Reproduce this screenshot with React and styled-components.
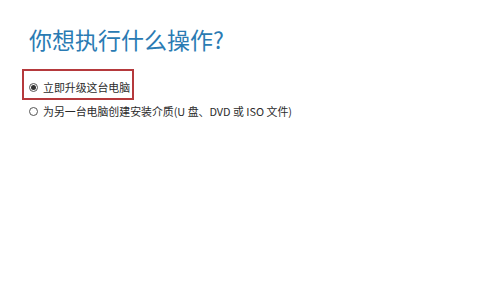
import React from "react";
import styled, { createGlobalStyle } from "styled-components";

const Global = createGlobalStyle`
  html, body { margin: 0; padding: 0; background: #ffffff; }
  body { font-family: "Noto Sans CJK SC", "Noto Sans", sans-serif; }
`;

const Page = styled.div`
  width: 500px;
  height: 291px;
  box-sizing: border-box;
  padding: 24px 0 0 29px;
  background: #fff;
`;

const Title = styled.h1`
  margin: 0;
  font-size: 23px;
  line-height: 30px;
  font-weight: 400;
  color: #2a7bb3;
  letter-spacing: 0;
`;

const Options = styled.div`
  display: flex;
  flex-direction: column;
  margin-top: 21px;
`;

const Option = styled.label`
  position: relative;
  display: flex;
  align-items: center;
  gap: 5px;
  height: 24px;
  font-size: 10.9px;
  color: #2b2b2b;
  cursor: pointer;
  &::before {
    content: "";
    display: ${(p) => (p.$highlight ? "block" : "none")};
    position: absolute;
    left: -7px;
    top: -6px;
    width: 112px;
    height: 31px;
    box-sizing: border-box;
    border: 2px solid #b5393c;
    pointer-events: none;
  }
`;

const Radio = styled.span`
  width: 9px;
  height: 9px;
  box-sizing: border-box;
  border-radius: 50%;
  border: 1px solid #555;
  display: flex;
  align-items: center;
  justify-content: center;
  flex: none;
  &::after {
    content: "";
    width: 5px;
    height: 5px;
    border-radius: 50%;
    background: #333;
    display: ${(p) => (p.$checked ? "block" : "none")};
  }
`;

export default function App() {
  return (
    <>
      <Global />
      <Page>
        <Title>你想执行什么操作?</Title>
        <Options>
          <Option $highlight>
            <Radio $checked />
            立即升级这台电脑
          </Option>
          <Option>
            <Radio />
            为另一台电脑创建安装介质(U 盘、DVD 或 ISO 文件)
          </Option>
        </Options>
      </Page>
    </>
  );
}
